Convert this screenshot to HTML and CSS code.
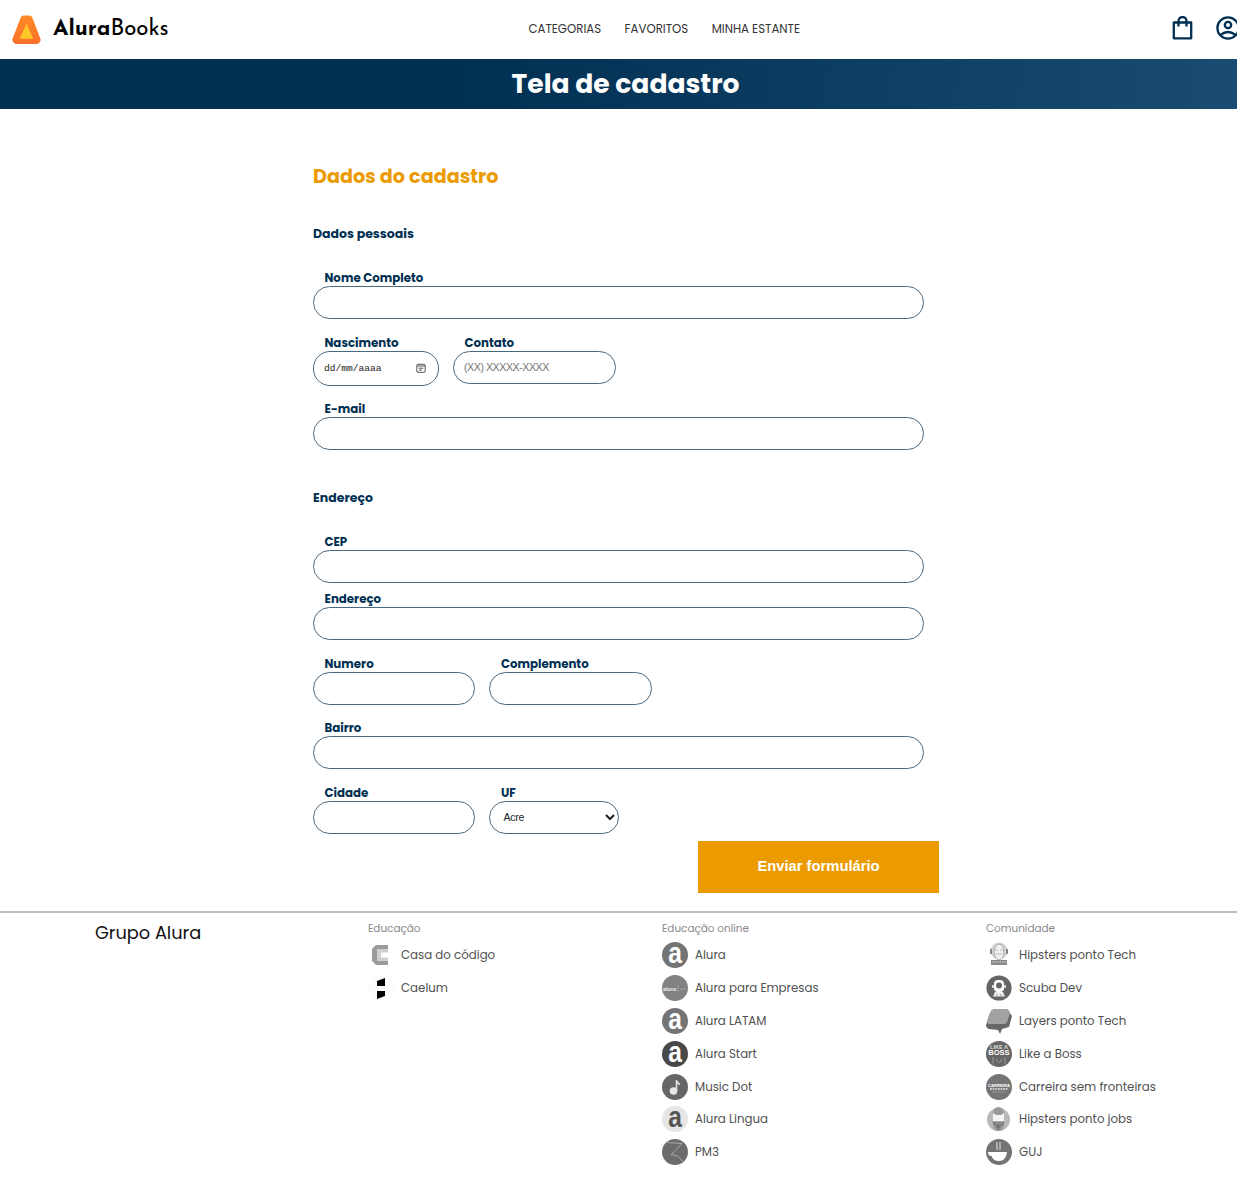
FILE: index.html
```html
<!DOCTYPE html>
<html lang="pt-br">
<head>
<meta charset="utf-8">
<title>AluraBooks</title>
<link rel="stylesheet" href="styles.css">
</head>
<body>
<header class="header">
  <a class="brand">
    <svg class="brand-mark" viewBox="0 0 30 30">
      <defs><linearGradient id="flame" x1="0" y1="0" x2="0" y2="1"><stop offset="0" stop-color="#ff8a25"/><stop offset="1" stop-color="#f9702a"/></linearGradient></defs>
      <path d="M12 0h6q2 0 3 2l8.4 22q.8 2-.6 3.500l-1.600 1.500q-.8.600-2 .600H4.800q-1.200 0-2-.600L1.200 27.500Q-.2 26 .6 24L9 2q1-2 3-2z" fill="url(#flame)"/>
      <path d="M15 8.500L22 24H8z" fill="#ffc629"/>
    </svg>
    <span class="brand-name"><b>Alura</b>Books</span>
  </a>
  <nav class="menu">
    <a class="menu-link">CATEGORIAS</a>
    <a class="menu-link">FAVORITOS</a>
    <a class="menu-link">MINHA ESTANTE</a>
  </nav>
  <div class="actions">
    <svg class="bag" viewBox="0 0 20 24" fill="none" stroke="#002f52" stroke-width="2.300" stroke-linejoin="round"><path d="M1.300 6.500h17.400v15.800H1.300zM6 10.500V5a4 4 0 0 1 8 0v5.500"/></svg>
    <svg class="user" viewBox="0 0 24 24" fill="none" stroke="#002f52" stroke-width="2.300"><circle cx="12" cy="12" r="10.600"/><circle cx="12" cy="9" r="3.200"/><path d="M4.500 18.800q7.500-5.600 15 0"/></svg>
  </div>
</header>
<div class="banner"><h1 class="banner-title">Tela de cadastro</h1></div>
<main class="content">
  <form class="form">
    <h2 class="form-title">Dados do cadastro</h2>
    <h3 class="group-title gt1">Dados pessoais</h3>
    <div class="field nome"><label class="label">Nome Completo</label><input class="input"></div>
    <div class="row">
      <div class="field"><label class="label">Nascimento</label>
        <div class="input date"><span>dd/mm/aaaa</span>
          <svg class="calendar" viewBox="0 0 10 10" fill="none" stroke="#555" stroke-width="1"><rect x=".8" y="1.300" width="8.400" height="8" rx="1.200"/><path d="M1 3h8M2.800 5.200h4.500M2.800 7.100h3"/></svg>
        </div></div>
      <div class="field"><label class="label">Contato</label><input class="input short phone" placeholder="(XX) XXXXX-XXXX"></div>
    </div>
    <div class="field email"><label class="label">E-mail</label><input class="input"></div>
    <h3 class="group-title gt2">Endereço</h3>
    <div class="field cep"><label class="label">CEP</label><input class="input"></div>
    <div class="field"><label class="label">Endereço</label><input class="input"></div>
    <div class="row">
      <div class="field"><label class="label">Numero</label><input class="input short"></div>
      <div class="field"><label class="label">Complemento</label><input class="input short"></div>
    </div>
    <div class="field bairro"><label class="label">Bairro</label><input class="input"></div>
    <div class="row">
      <div class="field"><label class="label">Cidade</label><input class="input short"></div>
      <div class="field"><label class="label">UF</label><select class="input uf"><option>Acre</option></select></div>
    </div>
    <button class="submit" type="button">Enviar formulário</button>
  </form>
</main>
<footer class="footer">
  <h2 class="footer-title">Grupo Alura</h2>
  <section class="links">
    <h3 class="links-title">Educação</h3>
    <a class="link"><svg class="logo" viewBox="0 0 26 26"><path d="M20 3v4H10v12h10v4H8l-4-4V7l4-4z" fill="#9b9b9b"/><path d="M20 7v3.500h-7v5h7V19H9V7z" fill="#cfcfcf"/></svg><span>Casa do código</span></a>
    <a class="link"><svg class="logo" viewBox="0 0 26 26"><circle cx="13" cy="13" r="13" fill="#fcfcfc"/><path d="M9 6l8-3v8H9zM9 16h8v5l-8 3z"/></svg><span>Caelum</span></a>
  </section>
  <section class="links">
    <h3 class="links-title">Educação online</h3>
    <a class="link"><svg class="logo" viewBox="0 0 26 26"><circle cx="13" cy="13" r="13" fill="#747474"/><text class="letter" transform="translate(13 21) scale(.82 1)" fill="#fff">a</text></svg><span>Alura</span></a>
    <a class="link"><svg class="logo" viewBox="0 0 26 26"><circle cx="13" cy="13" r="13" fill="#828282"/><text class="tiny" x="1" y="16" fill="#eee">alura</text><path d="M16 10v7M18 14h6" stroke="#aaa" stroke-width=".8"/></svg><span>Alura para Empresas</span></a>
    <a class="link"><svg class="logo" viewBox="0 0 26 26"><circle cx="13" cy="13" r="13" fill="#747474"/><text class="letter" transform="translate(13 21) scale(.82 1)" fill="#fff">a</text></svg><span>Alura LATAM</span></a>
    <a class="link"><svg class="logo" viewBox="0 0 26 26"><circle cx="13" cy="13" r="13" fill="#484848"/><text class="letter" transform="translate(13 21) scale(.82 1)" fill="#fff">a</text></svg><span>Alura Start</span></a>
    <a class="link"><svg class="logo" viewBox="0 0 26 26"><circle cx="13" cy="13" r="13" fill="#666"/><circle cx="11.500" cy="17" r="3.800" fill="#e6e6e6"/><path d="M14.500 17V6q.4 3 3.500 4.500" fill="none" stroke="#e6e6e6" stroke-width="1.500"/></svg><span>Music Dot</span></a>
    <a class="link"><svg class="logo" viewBox="0 0 26 26"><circle cx="13" cy="13" r="13" fill="#e6e6e6"/><text class="letter" transform="translate(13 21) scale(.82 1)" fill="#555">a</text></svg><span>Alura Lingua</span></a>
    <a class="link"><svg class="logo" viewBox="0 0 26 26"><circle cx="13" cy="13" r="13" fill="#6c6c6c"/><path d="M5 3.500L20 4.500L9 16q7-1 12 7" fill="none" stroke="#aaa" stroke-width="1"/></svg><span>PM3</span></a>
  </section>
  <section class="links">
    <h3 class="links-title">Comunidade</h3>
    <a class="link"><svg class="logo" viewBox="0 0 26 26"><ellipse cx="13" cy="9" rx="8.500" ry="8.500" fill="#d2d2d2"/><ellipse cx="13" cy="10" rx="4.800" ry="8" fill="#f0f0f0" stroke="#aaa"/><path d="M5 7v5M21 7v5" stroke="#888" stroke-width="2"/><path d="M9.500 8h2.500M14 8h2.500M10 12h6" stroke="#bbb"/><rect x="5" y="18" width="16" height="5" fill="#888"/><path d="M6 20h14" stroke="#ddd" stroke-dasharray="1.500 1"/></svg><span>Hipsters ponto Tech</span></a>
    <a class="link"><svg class="logo" viewBox="0 0 26 26"><circle cx="13" cy="13" r="12.600" fill="#666"/><rect x="8" y="5" width="10" height="12" rx="4" fill="#fff"/><circle cx="13" cy="10.500" r="3" fill="#666"/><path d="M7 10v3M19 10v3" stroke="#fff" stroke-width="1.500"/><path d="M9 17h8l2 4.500H7z" fill="#eee"/><path d="M11 19v2M15 19v2" stroke="#999"/></svg><span>Scuba Dev</span></a>
    <a class="link"><svg class="logo" viewBox="0 0 26 26"><path d="M1 14l3-9q1-3 4-4h13l5 7-3 11-7 2-2 5-2-4-9-1q-3-1-3-4z" fill="#686868"/><path d="M1 13l3-8q1-3 4-4h12q3 0 4 4l-3 9q-1 2-3 2H3q-2 0-2-3z" fill="#a2a2a2"/></svg><span>Layers ponto Tech</span></a>
    <a class="link"><svg class="logo" viewBox="0 0 26 26"><circle cx="13" cy="13" r="13" fill="#666"/><text class="tiny mid" x="13" y="7.500" fill="#ddd">LIKE A</text><text class="boss" x="13" y="14" fill="#fff">BOSS</text><path d="M7 16v7M19 16v7M10 18q3 7 6 0" fill="none" stroke="#999"/></svg><span>Like a Boss</span></a>
    <a class="link"><svg class="logo" viewBox="0 0 26 26"><circle cx="13" cy="13" r="13" fill="#757575"/><text class="carreira" x="13" y="13" fill="#fff">CARREIRA</text><path d="M4 15h18" stroke="#ddd" stroke-width="1.600" stroke-dasharray="2 .6"/><path d="M6 18h14" stroke="#aaa" stroke-width=".7"/></svg><span>Carreira sem fronteiras</span></a>
    <a class="link"><svg class="logo" viewBox="0 0 26 26"><circle cx="12.500" cy="13.500" r="11.500" fill="#b8b8b8"/><path d="M7 7q1-6 5.500-6T18 7v12q-1 6-5.500 6T7 19z" fill="#999"/><path d="M7 7l3 2h5l3-2v9H7z" fill="#f5f5f5"/><path d="M7 16h11l-2 3H9zM10 21h5M12.500 19v5" fill="none" stroke="#666"/></svg><span>Hipsters ponto jobs</span></a>
    <a class="link"><svg class="logo" viewBox="0 0 26 26"><circle cx="13" cy="13" r="13" fill="#747474"/><path d="M2 13h19q-1 9-8 9-6 0-7.500-5Q2 17 2 13z" fill="#fff"/><path d="M11 3v8M14 3v8" stroke="#ccc" stroke-width="1.300"/></svg><span>GUJ</span></a>
  </section>
</footer>
</body>
</html>
```
FILE: styles.css
```css
* { box-sizing: border-box; margin: 0; padding: 0; }
body {
  font-family: Poppins, Inter, "Open Sans", sans-serif;
  background: #fff;
  color: #111;
  overflow: hidden;
}
.header {
  display: grid;
  grid-template-columns: 528.500px 1fr 65px;
  align-items: center;
  height: 59px;
}
.brand { display: flex; align-items: center; gap: 12px; padding-left: 12px; }
.brand-mark { width: 29px; height: 30px; }
.brand-name { font: 22.300px/30px "Josefin Sans", Lato, sans-serif; color: #000; }
.brand-name b { font-weight: 700; }
.menu { display: flex; gap: 23.500px; margin-top: -2px; }
.menu-link { font-size: 11.750px; line-height: 18px; white-space: nowrap; color: #333; }
.actions { display: flex; align-items: center; gap: 24px; width: 68px; margin-top: -3px; }
.bag { width: 21px; height: 24px; flex: none; }
.user { width: 24px; height: 24px; flex: none; margin-left: -1px; }
.banner {
  height: 49.500px;
  background: linear-gradient(97deg, #002f52 36%, #1a4b70 100%);
  display: flex;
  justify-content: center;
  align-items: center;
}
.banner-title { font-size: 26.600px; line-height: 40px; font-weight: 700; color: #fff; padding-left: 14px; }
.content { padding-left: 313px; height: 802.500px; }
.form { width: 626px; display: flex; flex-direction: column; align-items: flex-start; }
.form-title { color: #eb9b00; font-size: 19.150px; line-height: 30px; font-weight: 700; margin-top: 53px; }
.group-title { color: #002f52; font-size: 12.500px; line-height: 20px; font-weight: 700; }
.gt1 { margin-top: 32px; }
.gt2 { margin-top: 37px; }
.field { display: flex; flex-direction: column; align-items: flex-start; }
.nome, .cep { margin-top: 25px; }
.nome { margin-bottom: 14px; }
.email { margin-top: 13px; }
.cep { margin-bottom: 6px; }
.bairro { margin: 13px 0 14px; }
.field + .row { margin-top: 14px; }
.nome + .row, .bairro + .row { margin-top: 0; }
.row { display: flex; align-items: flex-start; gap: 14px; }
.label { height: 18px; line-height: 18px; padding-left: 11.500px; font-size: 11.800px; font-weight: 700; color: #002f52; }
.input {
  width: 611px;
  height: 33px;
  margin: -1px 0 1px;
  border: 1px solid #4a687e;
  border-radius: 17px;
  background: #fff;
  padding: 0 10px;
  font: 10.700px "Liberation Sans", Arial, sans-serif;
  color: #222;
}
.input::placeholder { color: #757575; }
.short { width: 162.400px; }
.phone { width: 163px; letter-spacing: -.48px; }
.uf { width: 130px; padding: 0 0 0 9px; font-size: 10.500px; letter-spacing: -.2px; }
.date { display: flex; align-items: center; justify-content: space-between; width: 126px; height: 35px; padding-right: 12px; font: 9.600px "Liberation Mono", monospace; }
.calendar { width: 10px; height: 10px; }
.submit {
  align-self: flex-end;
  width: 241px;
  height: 52px;
  margin-top: 6px;
  padding-bottom: 2px;
  border: 0;
  background: #eb9b00;
  color: #fff;
  font: 700 14.750px "Liberation Sans", Arial, sans-serif;
}
.footer {
  display: grid;
  grid-template-columns: 273px 294px 324px 1fr;
  padding-left: 95px;
  border-top: 2px solid #bdbdbd;
}
.footer-title { font-size: 17.750px; line-height: 26px; font-weight: 400; margin-top: 7px; color: #111; }
.links { display: flex; flex-direction: column; }
.links-title { font-size: 10.450px; line-height: 18px; font-weight: 400; color: #888; margin: 7px 0 4.500px; }
.link { display: flex; align-items: center; gap: 7px; height: 32.900px; color: #505050; font-size: 11.800px; line-height: 18px; white-space: nowrap; }
.links-title + .link { margin-top: -4px; }
.logo { width: 26px; height: 26px; flex: none; overflow: visible; }
.letter { font: 700 30px "Liberation Sans", Arial, sans-serif; text-anchor: middle; }
.tiny { font: 700 5.500px "Liberation Sans", Arial, sans-serif; }
.mid { text-anchor: middle; }
.boss { font: 700 7.500px "Liberation Sans", Arial, sans-serif; text-anchor: middle; }
.carreira { font: 700 4.200px "Liberation Sans", Arial, sans-serif; text-anchor: middle; }
```
